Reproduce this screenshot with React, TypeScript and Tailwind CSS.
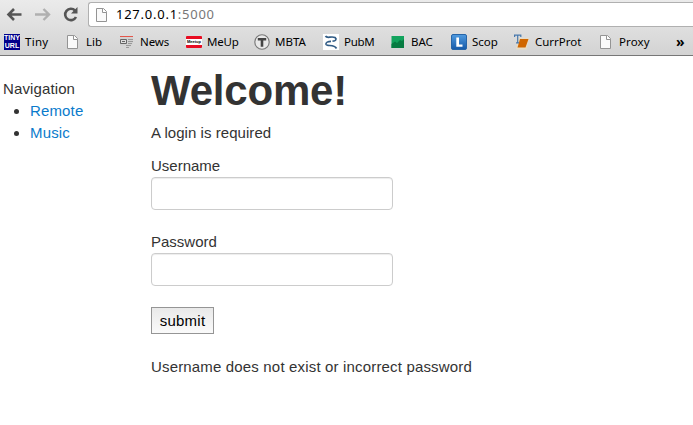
import type { ReactNode } from "react";

const PageIcon = () => (
  <svg width="16" height="16" viewBox="0 0 16 16" fill="none">
    <path d="M2.5 1.5H9.5L12.5 4.5V14.5H2.5Z" fill="#fafafa" stroke="#949494" />
    <path d="M8.5 1.5V5.5H12.5" stroke="#949494" fill="#fff" />
  </svg>
);

const TinyIcon = () => (
  <span className="flex h-4 w-4 flex-col items-center justify-center overflow-hidden bg-[#00008b] font-['Liberation_Sans'] text-[7px] leading-[8px] font-bold text-white">
    <span>TINY</span>
    <span>URL</span>
  </span>
);

const NewsIcon = () => (
  <svg width="16" height="16" viewBox="0 0 16 16">
    <path d="M1 2H14V9L10 14H8V12H1Z" fill="#d2d2d2" />
    <path d="M1 2.5H14" stroke="#e4564b" />
    <path d="M1.5 5.5H7.5V9.5H1.5Z" fill="#ddd" stroke="#666" />
    <path d="M3 7.5H6" stroke="#666" />
    <path d="M9 5.5H14M9 7.5H14M9 9.5H13M7 11.5H12M7 13.5H10" stroke="#999" />
  </svg>
);

const MeetupIcon = () => (
  <span className="flex h-3 w-4 items-center justify-center overflow-hidden rounded-[1px] border-y-[3px] border-[#e80c22] bg-white font-['Liberation_Sans'] text-[4px] leading-[6px] font-bold text-black">
    Meetup
  </span>
);

const TIcon = () => (
  <svg width="16" height="16" viewBox="0 0 16 16">
    <circle cx="8" cy="8" r="7.2" fill="#e8e8e8" stroke="#777" strokeWidth="1.1" />
    <path d="M3.8 4H12.2V6.6H9.3V12.8H6.7V6.6H3.8Z" fill="#444" />
  </svg>
);

const PubIcon = () => (
  <svg width="16" height="16" viewBox="0 0 16 16" fill="none">
    <path d="M0 0H16V16H0Z" fill="#fff" />
    <path d="M2.5 2C4 5 8 1.8 12 3.5C14 5 13 7 9.5 7.2" stroke="#315c86" strokeWidth="1.7" />
    <path d="M8 7.3C5 7.3 2.5 8.5 3 10.3C4 13 11 9.5 13.5 14.5" stroke="#315c86" strokeWidth="1.7" />
  </svg>
);

const BacIcon = () => (
  <svg width="16" height="16" viewBox="0 0 16 16">
    <path d="M1.5 2H14V14H1.5Z" fill="#12a35d" />
    <path d="M1.5 10L5 7.5L7 9L10 6L12 7L14 5V14H1.5Z" fill="#077c42" />
  </svg>
);

const ScopIcon = () => (
  <svg width="16" height="16" viewBox="0 0 16 16">
    <defs>
      <linearGradient id="scop" x2="0" y2="1">
        <stop stopColor="#509be0" />
        <stop offset="1" stopColor="#1559a8" />
      </linearGradient>
    </defs>
    <rect x=".5" y=".5" width="15" height="15" rx="1.5" fill="url(#scop)" stroke="#2765a8" />
    <path d="M5.3 3.5H8V10.5H11.5V12.8H5.3Z" fill="#fff" />
  </svg>
);

const ProtIcon = () => (
  <svg width="16" height="16" viewBox="0 0 16 16" fill="none">
    <path d="M4 4H15L12.5 15.5H2Z" fill="#e8dcc4" />
    <path d="M6 5H14.5L11.5 13.5H3.5Z" fill="#d06600" />
    <path d="M.6 3V1.2H6.8V3M3.7 1.2V9M2 8.8H5" stroke="#4879ad" strokeWidth="1.2" />
  </svg>
);

function Bookmark({ width, icon, label, text }: { width: string; icon: ReactNode; label: string; text: string }) {
  return (
    <div className={`flex shrink-0 items-center ${width}`}>
      <span className="flex h-4 w-4 shrink-0 items-center justify-center">{icon}</span>
      <span className={`whitespace-nowrap pl-[5px] ${text}`}>{label}</span>
    </div>
  );
}

function Field({ label, type }: { label: string; type: string }) {
  return (
    <label className="block h-[76px]">
      <span className="block h-[22px] leading-[22px]">{label}</span>
      <input
        type={type}
        className="block h-[33px] w-[242px] rounded-[4px] border border-[#ccc] bg-white px-2 shadow-[inset_0_1px_1px_rgba(0,0,0,0.075)] outline-none"
      />
    </label>
  );
}

export default function App() {
  return (
    <div className="h-[425px] w-[693px] overflow-hidden bg-white font-['Liberation_Sans',Arial,sans-serif] text-[15px] text-[#333]">
      <header className="h-14 border-b border-[#777] bg-linear-to-b from-[#ebebeb] to-[#d3d3d3] font-['Noto_Sans',sans-serif] text-black">
        <div className="flex h-7 items-start pl-[6px]">
          <svg width="76" height="28" viewBox="0 0 76 28" fill="none" className="mr-[6px] shrink-0">
            <path d="M15.5 14.5H3M8 9L2.5 14.5L8 20" stroke="#555" strokeWidth="2.6" />
            <path d="M29 14.5H42M37.5 9L43 14.5L37.5 20" stroke="#b0b0b0" strokeWidth="2.4" />
            <path d="M69 10.5A5.7 5.7 0 1 0 70 17" stroke="#555" strokeWidth="2.6" />
            <path d="M71.5 7V13.5H65Z" fill="#555" />
          </svg>
          <div className="mt-[2px] flex h-[25px] min-w-0 flex-1 items-center gap-[6px] rounded-l-[3px] border border-r-0 border-[#b0b0b0] bg-white pl-[5px] text-[13px]">
            <PageIcon />
            <span className="tracking-[0.75px]">
              127.0.0.1<span className="text-[#777]">:5000</span>
            </span>
          </div>
        </div>
        <nav className="flex h-7 items-center pl-1 text-[11.5px]">
          <Bookmark width="w-[61px]" icon={<TinyIcon />} label="Tiny" text="tracking-[0.3px]" />
          <Bookmark width="w-[54px]" icon={<PageIcon />} label="Lib" text="" />
          <Bookmark width="w-[67px]" icon={<NewsIcon />} label="News" text="tracking-[-0.1px]" />
          <Bookmark width="w-[68px]" icon={<MeetupIcon />} label="MeUp" text="tracking-[-0.2px]" />
          <Bookmark width="w-[69px]" icon={<TIcon />} label="MBTA" text="" />
          <Bookmark width="w-[67px]" icon={<PubIcon />} label="PubM" text="tracking-[-0.3px]" />
          <Bookmark width="w-[61px]" icon={<BacIcon />} label="BAC" text="" />
          <Bookmark width="w-[63px]" icon={<ScopIcon />} label="Scop" text="" />
          <Bookmark width="w-[84px]" icon={<ProtIcon />} label="CurrProt" text="" />
          <Bookmark width="w-[78px]" icon={<PageIcon />} label="Proxy" text="tracking-[0.1px]" />
          <span className="text-[14px] leading-5 font-bold">»</span>
        </nav>
      </header>
      <div className="flex">
        <aside className="w-[151px] shrink-0 pt-[22px] pl-[3px] leading-[22px]">
          <div className="tracking-[0.12px]">Navigation</div>
          <ul className="list-disc pl-[27px] tracking-[0.15px]">
            <li><a href="#" className="text-[#0a7bcc]">Remote</a></li>
            <li><a href="#" className="text-[#0a7bcc]">Music</a></li>
          </ul>
        </aside>
        <main className="pt-[13px]">
          <h1 className="h-[53px] text-[42px] leading-[44px] font-bold tracking-[-0.2px]">Welcome!</h1>
          <p className="h-[33px] leading-[22px] tracking-[0.05px]">A login is required</p>
          <form>
            <Field label="Username" type="text" />
            <Field label="Password" type="password" />
            <button type="button" className="block h-[27px] w-[63px] border border-[#959595] bg-linear-to-b from-[#e9e9e9] to-[#fafafa] text-center leading-[22px] tracking-[0.25px] text-black">
              submit
            </button>
          </form>
          <p className="mt-[22px] leading-[22px] tracking-[0.165px]">Username does not exist or incorrect password</p>
        </main>
      </div>
    </div>
  );
}
